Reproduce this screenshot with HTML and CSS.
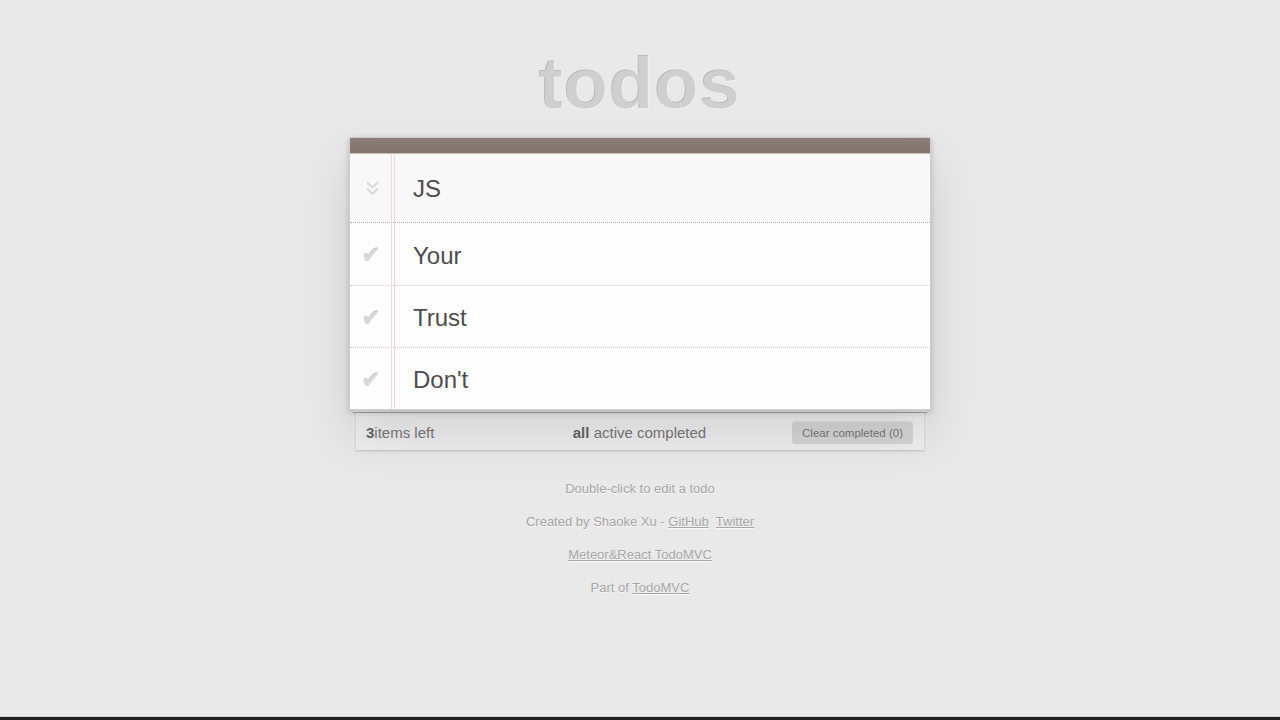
FILE: index.html
```html
<!DOCTYPE html>
<html lang="en">
<head>
    <meta charset="UTF-8">
    <meta name="viewport" content="width=device-width, initial-scale=1.0">
    <title>Meteor &amp; React • TodoMVC</title>
    <link rel="stylesheet" href="styles.css">
</head>
<body>

<div class="wrap">
    <h1 class="title">todos</h1>

    <!-- The todo sheet -->
    <section class="app">
        <div class="app-bar"></div>
        <div class="new-todo">
            <span class="toggle-all">&raquo;</span>
            <span class="new-text">JS</span>
        </div>
        <ul class="todo-list">
            <li><span class="check">&#10004;</span><label>Your</label></li>
            <li><span class="check">&#10004;</span><label>Trust</label></li>
            <li><span class="check">&#10004;</span><label>Don't</label></li>
        </ul>
    </section>

    <!-- Paper edges under the sheet -->
    <div class="sheet"></div>
    <footer class="footer">
        <span class="count"><strong>3</strong>items left</span>
        <span class="filters"><strong>all</strong> active completed</span>
        <span class="clear-wrap"><button class="clear">Clear completed (0)</button></span>
    </footer>

    <div class="info">
        <p>Double-click to edit a todo</p>
        <p>Created by Shaoke Xu - <a href="#">GitHub</a>&nbsp; <a href="#">Twitter</a></p>
        <p><a href="#">Meteor&amp;React TodoMVC</a></p>
        <p>Part of <a href="#">TodoMVC</a></p>
    </div>
</div>

<div class="dock"></div>

</body>
</html>
```

FILE: styles.css
```css
html, body {
    margin: 0;
    padding: 0;
}
body {
    font: 14px "Liberation Sans", Arial, sans-serif;
    background-color: #e9e9e9;
    color: #4d4d4d;
}
.wrap {
    width: 580px;
    margin: 0 auto;
    padding-top: 48px;
}
.title {
    margin: 0 0 17px;
    font-size: 73px;
    line-height: 72px;
    font-weight: bold;
    letter-spacing: 0.6px;
    text-align: center;
    color: rgba(255, 255, 255, 0.3);
    text-shadow: -1px -1px rgba(0, 0, 0, 0.2);
}
.app {
    position: relative;
    margin: 0 -1px;
    background-color: #fdfdfd;
    border: 1px solid #cfcfcf;
    border-radius: 2px 2px 0 0;
    box-shadow: 0 2px 6px 0 rgba(0, 0, 0, 0.2), 0 25px 50px 0 rgba(0, 0, 0, 0.12);
}
/* red margin line of the notepad */
.app::before {
    content: '';
    position: absolute;
    top: 0;
    bottom: 0;
    left: 41px;
    width: 2px;
    border-left: 1px solid #f5d6d6;
    border-right: 1px solid #f5d6d6;
}
.app-bar {
    position: relative;
    z-index: 2;
    height: 15px;
    background: linear-gradient(#8f7e77, #82736d);
    border-bottom: 1px solid #c8bfbb;
}
.new-todo {
    display: flex;
    align-items: center;
    height: 68px;
    background-color: rgba(0, 0, 0, 0.02);
    border-bottom: 1px dotted #adadad;
}
.toggle-all {
    width: 46px;
    padding-bottom: 2px;
    text-align: center;
    font-size: 28px;
    color: #d9d9d9;
    transform: rotate(90deg);
    line-height: 1;
}
.new-text {
    margin-left: 17px;
    padding-top: 1px;
    font-size: 24px;
    color: #4d4d4d;
}
.todo-list {
    margin: 0;
    padding: 0;
    list-style: none;
}
.todo-list li {
    display: flex;
    align-items: center;
    height: 61px;
    font-size: 24px;
    border-bottom: 1px dotted #cccccc;
}
.todo-list li:first-child {
    height: 62px;
}
.todo-list li:last-child {
    border-bottom: none;
}
.check {
    width: 42px;
    padding-top: 2px;
    text-align: center;
    font-family: "DejaVu Sans", sans-serif;
    font-size: 23px;
    color: #d9d9d9;
    text-shadow: 0 -1px 0 #bfbfbf;
}
.todo-list label {
    margin-left: 21px;
    padding-top: 2px;
    line-height: 29px;
}
.sheet {
    height: 2px;
    margin: 0 3px;
    background-color: #f7f7f7;
    box-shadow: 0 1px 1px rgba(0, 0, 0, 0.3);
}
.footer {
    display: grid;
    grid-template-columns: 1fr auto 1fr;
    align-items: center;
    height: 35px;
    margin: 1px 6px 0;
    padding: 2px 11px 0 10px;
    background-color: #efefef;
    box-shadow: 0 1px 2px rgba(0, 0, 0, 0.2);
    font-size: 15px;
    color: #777777;
}
.footer strong {
    color: #666666;
}
.filters {
    text-align: center;
}
.clear-wrap {
    text-align: right;
}
.clear {
    font: 11.5px "Liberation Sans", Arial, sans-serif;
    color: #777777;
    line-height: 22px;
    padding: 0 10px;
    border: none;
    border-radius: 3px;
    background-color: rgba(0, 0, 0, 0.1);
    box-shadow: 0 -1px 0 0 rgba(0, 0, 0, 0.05);
}
.info {
    margin-top: 30px;
    text-align: center;
    font-size: 13px;
    color: #a6a6a6;
    text-shadow: 0 1px 0 rgba(255, 255, 255, 0.7);
}
.info p {
    margin: 0 0 15px;
    line-height: 18px;
}
.info a {
    color: inherit;
}
.dock {
    position: fixed;
    left: 0;
    right: 0;
    bottom: 0;
    height: 3px;
    background-color: #1c1f1d;
    border-top: 1px solid #cfcfcf;
}
```
